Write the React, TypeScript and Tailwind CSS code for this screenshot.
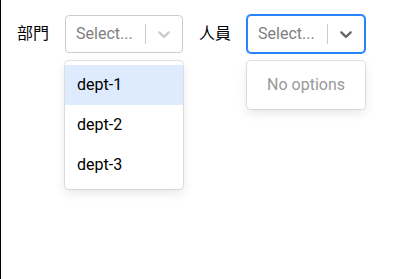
import type { ReactNode } from 'react';

const font = { fontFamily: 'Roboto, "Noto Sans CJK TC", sans-serif' };

function Chevron({ className }: { className: string }) {
  return (
    <svg viewBox="0 0 20 20" width="20" height="20" className={className} fill="currentColor" aria-hidden>
      <path d="M4.516 7.548c0.436-0.446 1.043-0.481 1.576 0l3.908 3.747 3.908-3.747c0.533-0.481 1.141-0.446 1.574 0 0.436 0.445 0.408 1.197 0 1.615-0.406 0.418-4.695 4.502-4.695 4.502-0.217 0.223-0.502 0.335-0.787 0.335s-0.57-0.112-0.789-0.335c0 0-4.287-4.084-4.695-4.502s-0.436-1.17 0-1.615z" />
    </svg>
  );
}

function Select({ focused, menu }: { focused?: boolean; menu: ReactNode }) {
  return (
    <div className="relative w-[118px]">
      <div
        className={
          focused
            ? 'flex min-h-[38px] items-center rounded border border-[#2684ff] bg-white shadow-[0_0_0_1px_#2684ff]'
            : 'flex min-h-[38px] items-center rounded border border-[#cccccc] bg-white'
        }
      >
        <div className="min-w-0 flex-1 px-2 py-0.5">
          <div className="mx-0.5 whitespace-nowrap text-base leading-6 text-[#808080]">Select...</div>
        </div>
        <div className="flex self-stretch">
          <span className="my-2 w-px self-stretch bg-[#cccccc]" />
          <div className="flex items-center p-2">
            <Chevron className={focused ? 'text-[#666666]' : 'text-[#cccccc]'} />
          </div>
        </div>
      </div>
      <div className="absolute left-0 top-full z-10 mt-2 w-full rounded bg-white py-1 shadow-[0_0_0_1px_rgba(0,0,0,0.1),0_4px_11px_rgba(0,0,0,0.1)]">
        {menu}
      </div>
    </div>
  );
}

export default function App() {
  const depts = ['dept-1', 'dept-2', 'dept-3'];
  return (
    <div className="min-h-screen border-l border-black bg-white text-base text-black" style={font}>
      <div className="flex items-center gap-4 pl-4 pt-[15px]">
        <span className="leading-6">部門</span>
        <Select
          menu={depts.map((d, i) => (
            <div key={d} className={i === 0 ? 'bg-[#deebff] px-3 py-2 leading-6' : 'px-3 py-2 leading-6'}>
              {d}
            </div>
          ))}
        />
        <span className="leading-6">人員</span>
        <Select focused menu={<div className="px-3 py-2 text-center leading-6 text-[#999999]">No options</div>} />
      </div>
    </div>
  );
}
